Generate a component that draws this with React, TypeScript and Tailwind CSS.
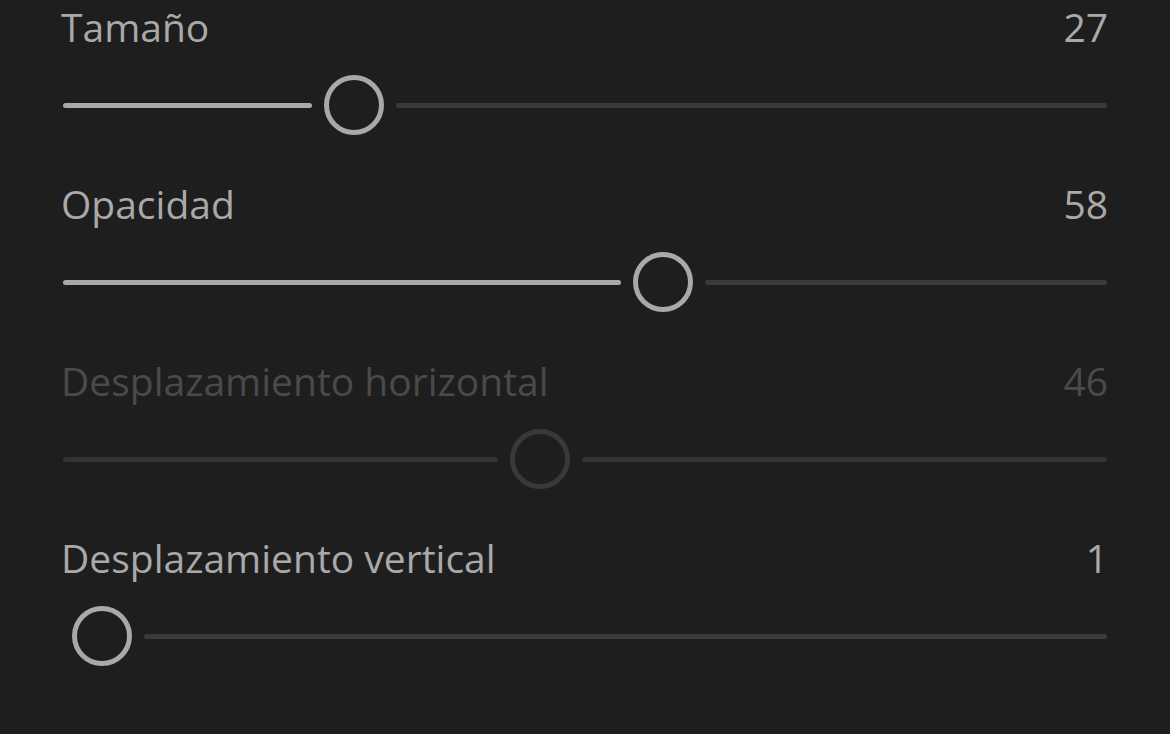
import React from "react";

type Row = { label: string; value: string; center: number; disabled?: boolean };

const rows: Row[] = [
  { label: "Tamaño", value: "27", center: 354 },
  { label: "Opacidad", value: "58", center: 663 },
  { label: "Desplazamiento horizontal", value: "46", center: 540, disabled: true },
  { label: "Desplazamiento vertical", value: "1", center: 102 },
];

const TRACK_LEFT = 63;

function Slider({ row }: { row: Row }) {
  const leftW = Math.max(0, row.center - 42 - TRACK_LEFT);
  const thumbLeft = row.center - 30 - TRACK_LEFT;
  const fill = row.disabled ? "bg-[#333333]" : "bg-[#a9a9a9]";
  const rest = row.disabled ? "bg-[#333333]" : "bg-[#3a3a3a]";
  const thumb = row.disabled ? "border-[#393939]" : "border-[#a9a9a9]";
  return (
    <div className="flex items-center h-[60px] mt-[23px] ml-[2px] mr-[1px]">
      {leftW > 0 ? (
        <div className={`h-[5px] rounded-full ${fill}`} style={{ width: leftW }} />
      ) : (
        <div style={{ width: thumbLeft }} />
      )}
      <div
        className={`w-[60px] h-[60px] shrink-0 rounded-full border-[5px] ${thumb} ${leftW > 0 ? "ml-[12px]" : ""}`}
      />
      <div className={`h-[5px] flex-1 rounded-full ml-[12px] ${rest}`} />
    </div>
  );
}

export default function App() {
  return (
    <div
      className="w-[1170px] h-[734px] bg-[#1e1e1e] overflow-hidden pl-[61px] pr-[62px] pt-[2px]"
      style={{ fontFamily: '"Open Sans", sans-serif' }}
    >
      {rows.map((r) => (
        <div key={r.label} className="h-[177px]">
          <div
            className={`flex justify-between text-[39px] leading-[50px] ${r.disabled ? "text-[#4a4a4a]" : "text-[#a9a9a9]"}`}
          >
            <span>{r.label}</span>
            <span>{r.value}</span>
          </div>
          <Slider row={r} />
        </div>
      ))}
    </div>
  );
}
